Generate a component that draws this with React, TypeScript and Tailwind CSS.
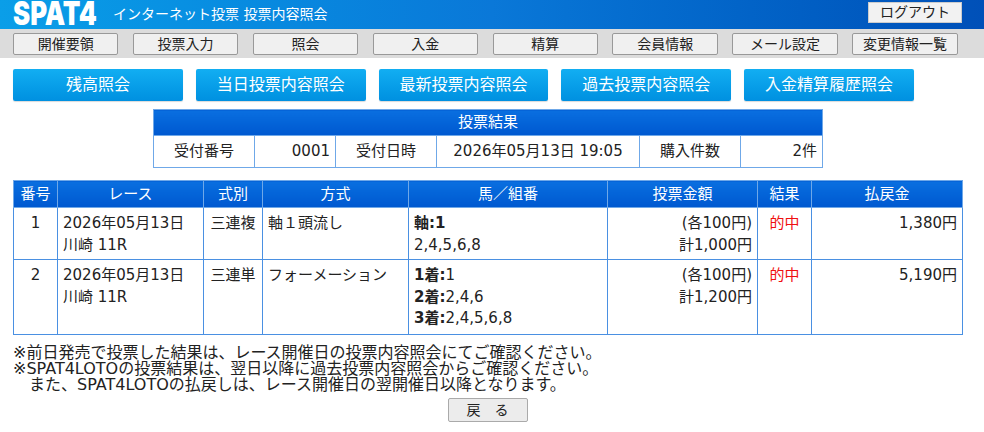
const navItems = ["開催要領", "投票入力", "照会", "入金", "精算", "会員情報", "メール設定", "変更情報一覧"];
const inquiryItems = ["残高照会", "当日投票内容照会", "最新投票内容照会", "過去投票内容照会", "入金精算履歴照会"];

const th = "border border-[#6fa8e8] bg-gradient-to-b from-[#0a6fe0] to-[#0058d0] font-normal text-white p-0 pt-[1px] text-center";
const td = "border border-[#4a90e2] align-top text-[#222] px-[5px] pt-[5px] pb-0";
const summaryTd = "border border-[#6fa8e8] pt-[1px]";

export default function App() {
  return (
    <div
      className="w-[984px] h-[432px] overflow-hidden bg-white text-[15px] leading-[21.5px] text-[#222]"
      style={{ fontFamily: '"DejaVu Sans", "Noto Sans CJK JP", sans-serif' }}
    >
      <header className="h-[29px] flex items-center bg-gradient-to-r from-[#0a9ee8] via-[#0a78d8] to-[#0050b8] pl-[13px] pr-[22px]">
        <span
          className="w-[85px] -mt-[2px] whitespace-nowrap text-[33px] font-black leading-[29px] text-white scale-x-[0.78] origin-left"
          style={{ fontFamily: "Inter, sans-serif" }}
        >
          SPAT4
        </span>
        <span className="ml-[15px] text-[14px] text-white">インターネット投票 投票内容照会</span>
        <button className="ml-auto mt-[-5px] w-[94px] h-[21px] bg-[#f2f2f2] border border-[#ccc] text-[14px] leading-[19px] text-[#222]">
          ログアウト
        </button>
      </header>

      <nav className="h-[29px] bg-[#dcdcdc] pl-[13px] pt-[4px] flex gap-[14.5px]">
        {navItems.map((item) => (
          <button
            key={item}
            className="w-[105.4px] h-[22px] rounded-[2px] bg-[#f0f0f0] border border-[#999] text-[14px] leading-[20px] text-[#222]"
          >
            {item}
          </button>
        ))}
      </nav>

      <div className="flex gap-[13px] pl-[13px] pt-[11px]">
        {inquiryItems.map((item) => (
          <button
            key={item}
            className="w-[169.8px] h-[32px] rounded-[2px] bg-gradient-to-b from-[#12aef2] to-[#0090e0] text-[16px] leading-[32px] text-white shadow-[0_1px_1px_rgba(0,0,0,0.15)]"
          >
            {item}
          </button>
        ))}
      </div>

      <table className="ml-[153px] mt-[8px] w-[669px] table-fixed border-collapse">
        <colgroup>
          <col className="w-[101px]" />
          <col className="w-[81px]" />
          <col className="w-[101px]" />
          <col className="w-[203px]" />
          <col className="w-[101px]" />
          <col className="w-[82px]" />
        </colgroup>
        <thead>
          <tr className="h-[26px]">
            <th colSpan={6} className={th}>投票結果</th>
          </tr>
        </thead>
        <tbody>
          <tr className="h-[32px] text-center">
            <td className={summaryTd}>受付番号</td>
            <td className={`${summaryTd} text-right pr-[5px]`}>0001</td>
            <td className={summaryTd}>受付日時</td>
            <td className={summaryTd}>2026年05月13日 19:05</td>
            <td className={summaryTd}>購入件数</td>
            <td className={`${summaryTd} text-right pr-[5px]`}>2件</td>
          </tr>
        </tbody>
      </table>

      <table className="ml-[13px] mt-[12px] w-[949px] table-fixed border-collapse">
        <colgroup>
          <col className="w-[44px]" />
          <col className="w-[146px]" />
          <col className="w-[59px]" />
          <col className="w-[146px]" />
          <col className="w-[199px]" />
          <col className="w-[150px]" />
          <col className="w-[54px]" />
          <col className="w-[151px]" />
        </colgroup>
        <thead>
          <tr className="h-[27px]">
            {["番号", "レース", "式別", "方式", "馬／組番", "投票金額", "結果", "払戻金"].map((label) => (
              <th key={label} className={th}>{label}</th>
            ))}
          </tr>
        </thead>
        <tbody>
          <tr className="h-[52px]">
            <td className={`${td} text-center`}>1</td>
            <td className={td}>2026年05月13日<br />川崎 11R</td>
            <td className={`${td} text-center px-0`}>三連複</td>
            <td className={td}>軸１頭流し</td>
            <td className={td}><b>軸:1</b><br />2,4,5,6,8</td>
            <td className={`${td} text-right`}>(各100円)<br />計1,000円</td>
            <td className={`${td} text-center text-[#f01010]`}>的中</td>
            <td className={`${td} text-right`}>1,380円</td>
          </tr>
          <tr className="h-[75px]">
            <td className={`${td} text-center`}>2</td>
            <td className={td}>2026年05月13日<br />川崎 11R</td>
            <td className={`${td} text-center px-0`}>三連単</td>
            <td className={td}>フォーメーション</td>
            <td className={td}><b>1着:</b>1<br /><b>2着:</b>2,4,6<br /><b>3着:</b>2,4,5,6,8</td>
            <td className={`${td} text-right`}>(各100円)<br />計1,200円</td>
            <td className={`${td} text-center text-[#f01010]`}>的中</td>
            <td className={`${td} text-right`}>5,190円</td>
          </tr>
        </tbody>
      </table>

      <div className="ml-[13px] mt-[10px] text-[16px] leading-[16px]">
        <p>※前日発売で投票した結果は、レース開催日の投票内容照会にてご確認ください。</p>
        <p>※SPAT4LOTOの投票結果は、翌日以降に過去投票内容照会からご確認ください。</p>
        <p className="pl-[16px]">また、SPAT4LOTOの払戻しは、レース開催日の翌開催日以降となります。</p>
      </div>

      <div className="flex justify-center pr-[9px] mt-[5px]">
        <button className="w-[80px] h-[24px] rounded-[2px] bg-[#ececec] border border-[#aaa] text-[14px] leading-[22px] text-[#222]">
          戻　る
        </button>
      </div>
    </div>
  );
}
